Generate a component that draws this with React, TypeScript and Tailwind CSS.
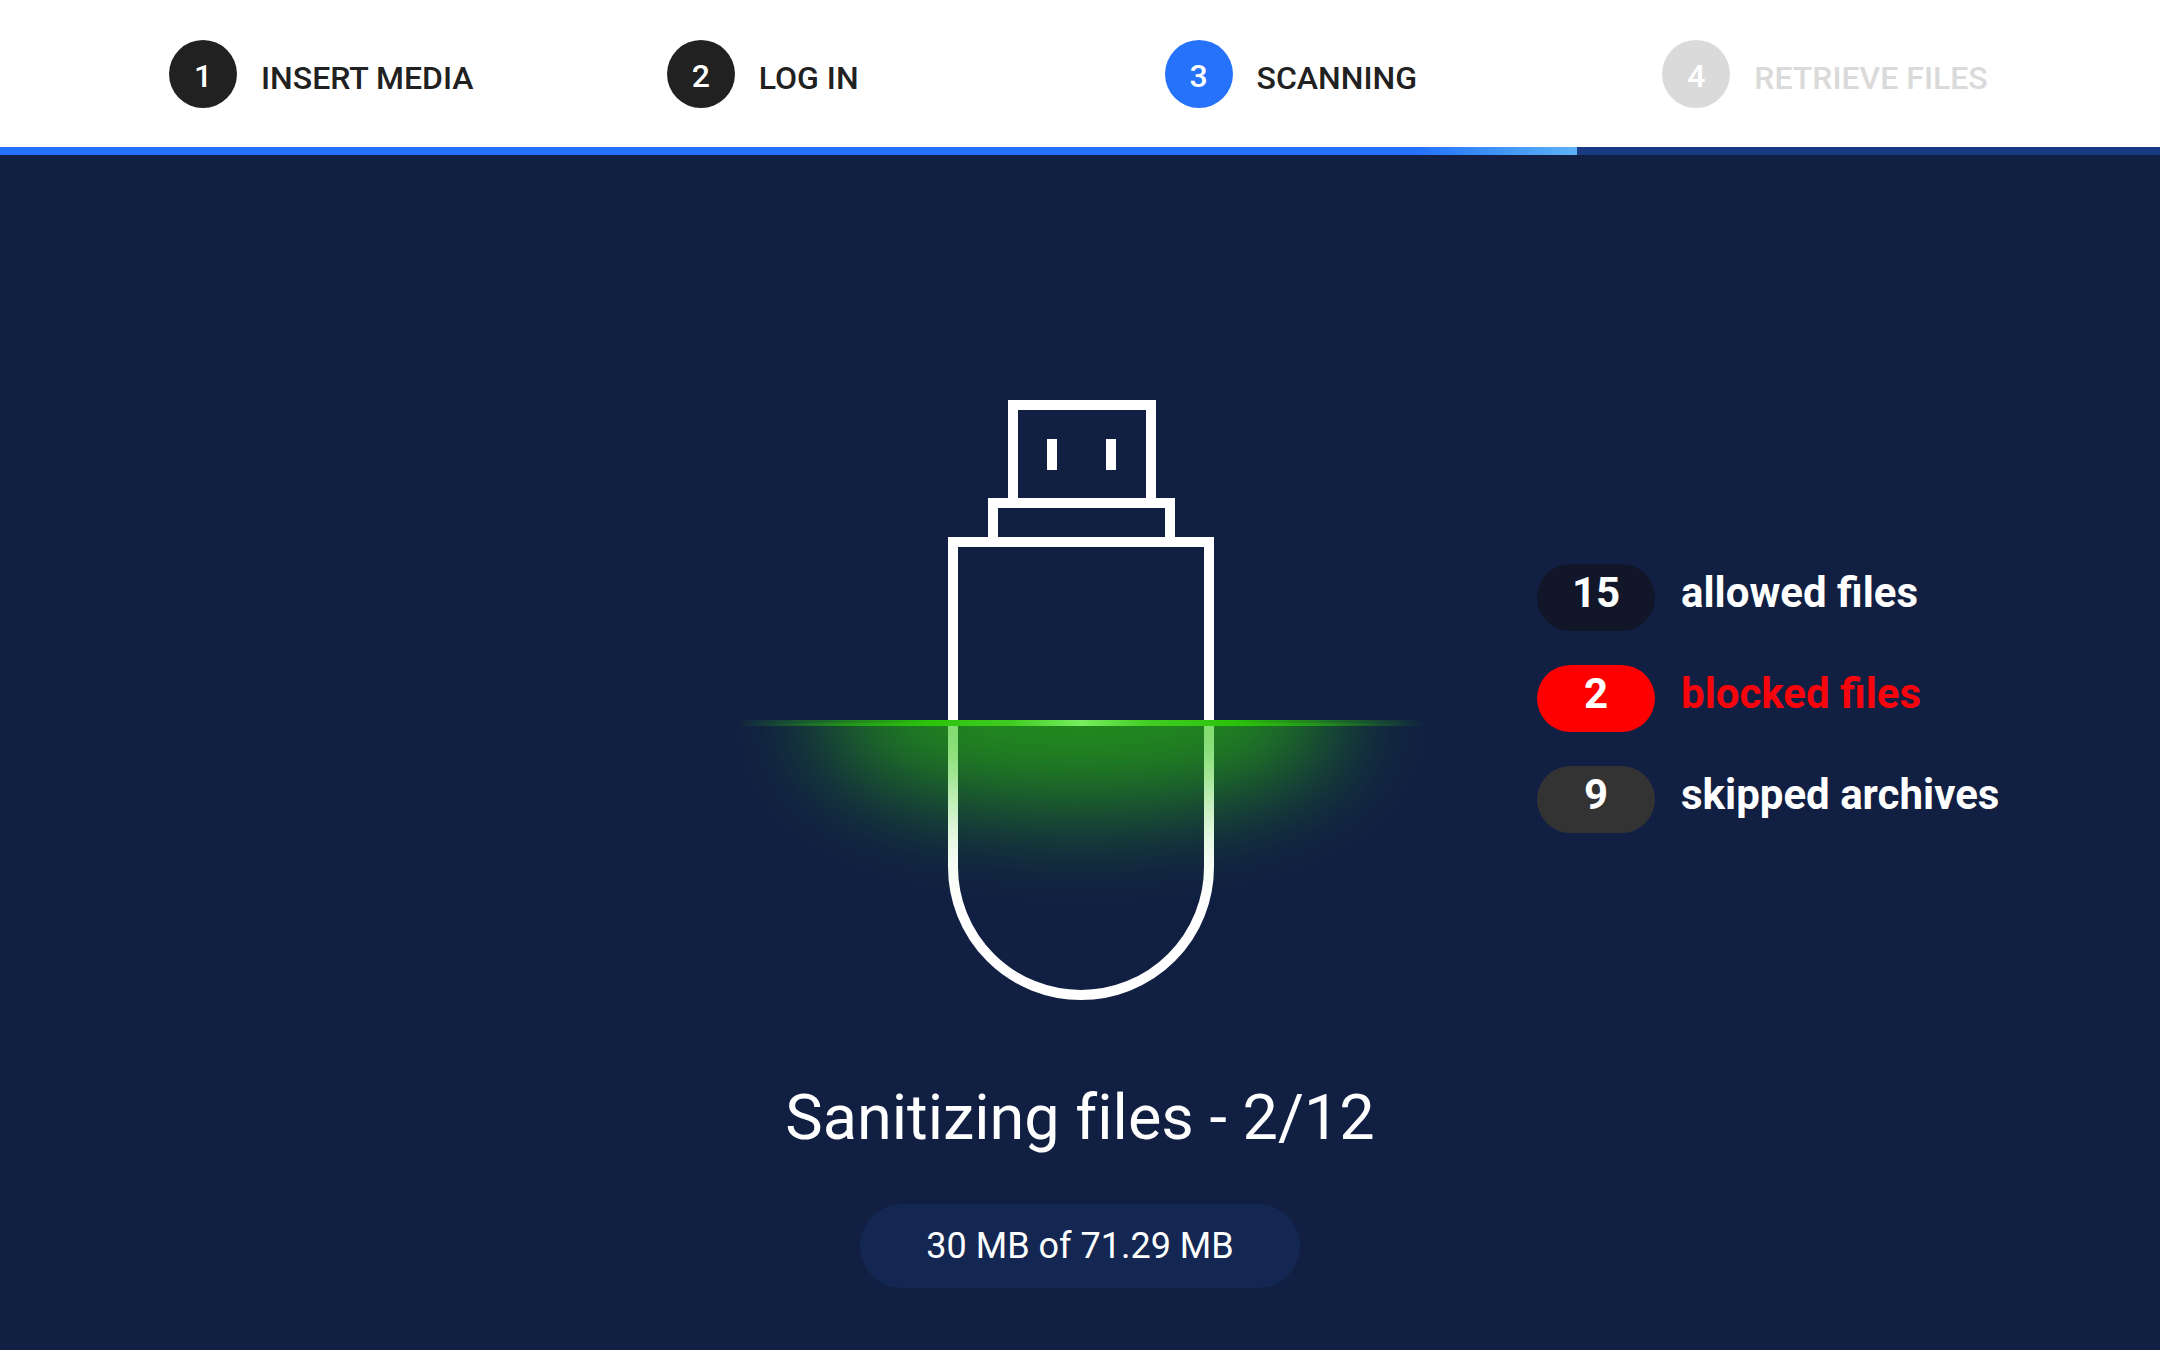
import React from 'react';
import clsx from 'clsx';

type StepState = 'done' | 'active' | 'upcoming';

interface Step {
  label: string;
  state: StepState;
}

const steps: Step[] = [
  { label: 'INSERT MEDIA', state: 'done' },
  { label: 'LOG IN', state: 'done' },
  { label: 'SCANNING', state: 'active' },
  { label: 'RETRIEVE FILES', state: 'upcoming' },
];

const stats = [
  { count: 15, label: 'allowed files', badge: 'bg-[#111729]', text: 'text-white' },
  { count: 2, label: 'blocked files', badge: 'bg-[#ff0000]', text: 'text-[#f8040c]' },
  { count: 9, label: 'skipped archives', badge: 'bg-[#333333]', text: 'text-white' },
];

const progress = 73;

const StepHeader = () => (
  <header className="bg-white">
    <ol className="grid grid-cols-4 pl-[169px] pt-10 pb-[39px]">
      {steps.map((step, index) => (
        <li
          key={step.label}
          aria-current={step.state === 'active' ? 'step' : undefined}
          className="flex items-center gap-6"
        >
          <span
            className={clsx(
              'flex size-[68px] shrink-0 items-center justify-center rounded-full pt-1 text-[32px] leading-10 font-medium text-white',
              step.state === 'done' && 'bg-[#212121]',
              step.state === 'active' && 'bg-[#2672fb]',
              step.state === 'upcoming' && 'bg-[#dadada]'
            )}
          >
            {index + 1}
          </span>
          <span
            className={clsx(
              'pt-2 text-[32px] leading-10 font-medium whitespace-nowrap',
              step.state === 'upcoming' ? 'text-[#dadada]' : 'text-[#212121]'
            )}
          >
            {step.label}
          </span>
        </li>
      ))}
    </ol>
    <div
      role="progressbar"
      aria-label="Scan progress"
      aria-valuenow={progress}
      aria-valuemin={0}
      aria-valuemax={100}
      className="h-2 bg-[#173a80]"
    >
      <div
        className="h-full bg-linear-to-r from-[#2672fb] from-90% to-[#5eb2f8]"
        style={{ width: `${progress}%` }}
      />
    </div>
  </header>
);

const UsbScan = () => (
  <svg viewBox="-1 0 760 600" fill="none" className="h-auto w-[760px] overflow-visible" aria-hidden="true">
    <defs>
      <linearGradient id="beam" x1="35" y1="0" x2="725" y2="0" gradientUnits="userSpaceOnUse">
        <stop offset="0" stopColor="#2bc40b" stopOpacity="0" />
        <stop offset="0.28" stopColor="#2bc40b" />
        <stop offset="0.4" stopColor="#40cc22" />
        <stop offset="0.5" stopColor="#78ee60" />
        <stop offset="0.6" stopColor="#40cc22" />
        <stop offset="0.72" stopColor="#2bc40b" />
        <stop offset="1" stopColor="#2bc40b" stopOpacity="0" />
      </linearGradient>
      <filter
        id="soften"
        x="-150"
        y="0"
        width="1060"
        height="700"
        filterUnits="userSpaceOnUse"
        colorInterpolationFilters="sRGB"
      >
        <feGaussianBlur stdDeviation="50" />
      </filter>
      <clipPath id="belowBeam">
        <rect x="-150" y="323" width="1060" height="277" />
      </clipPath>
    </defs>

    {/* USB stick */}
    <g stroke="#fff" strokeWidth="10">
      <path d="M312 103V5H450V103" />
      <path d="M292 142V103H469V142" />
      <path d="M252 142H508V467A128 128 0 0 1 252 467Z" />
      <path d="M351 39V70M410 39V70" />
    </g>

    {/* Scanner light */}
    <g clipPath="url(#belowBeam)">
      <ellipse cx="380" cy="318" rx="262" ry="88" fill="#2bc40b" fillOpacity="0.68" filter="url(#soften)" />
    </g>
    <rect x="35" y="320" width="690" height="6" fill="url(#beam)" />
  </svg>
);

const ScanStats = () => (
  <ul className="flex flex-col gap-[34px] pb-[3px] pl-[77px]">
    {stats.map((stat) => (
      <li key={stat.label} className="flex h-[67px] items-start gap-[26px] text-[42px] leading-[58px] font-bold">
        <span className={clsx('h-full w-[118px] rounded-full text-center text-white', stat.badge)}>
          {stat.count}
        </span>
        <span className={clsx('whitespace-nowrap', stat.text)}>{stat.label}</span>
      </li>
    ))}
  </ul>
);

const App = () => {
  return (
    <div className="flex min-h-screen flex-col bg-[#111f42] font-[Roboto,'Liberation_Sans',sans-serif]">
      <StepHeader />
      <main className="flex flex-1 flex-col items-center pt-[245px] pb-16 text-white">
        <div className="grid w-full grid-cols-[1fr_auto_1fr] items-center">
          <div />
          <UsbScan />
          <ScanStats />
        </div>
        <h1 className="mt-[78px] text-[63px] leading-20 [font-variant-ligatures:none]">
          Sanitizing files - 2/12
        </h1>
        <p className="mt-[46px] rounded-full bg-[#142753] px-[66px] py-[18px] text-[36px] leading-12">
          30 MB of 71.29 MB
        </p>
      </main>
    </div>
  );
};

export default App;
